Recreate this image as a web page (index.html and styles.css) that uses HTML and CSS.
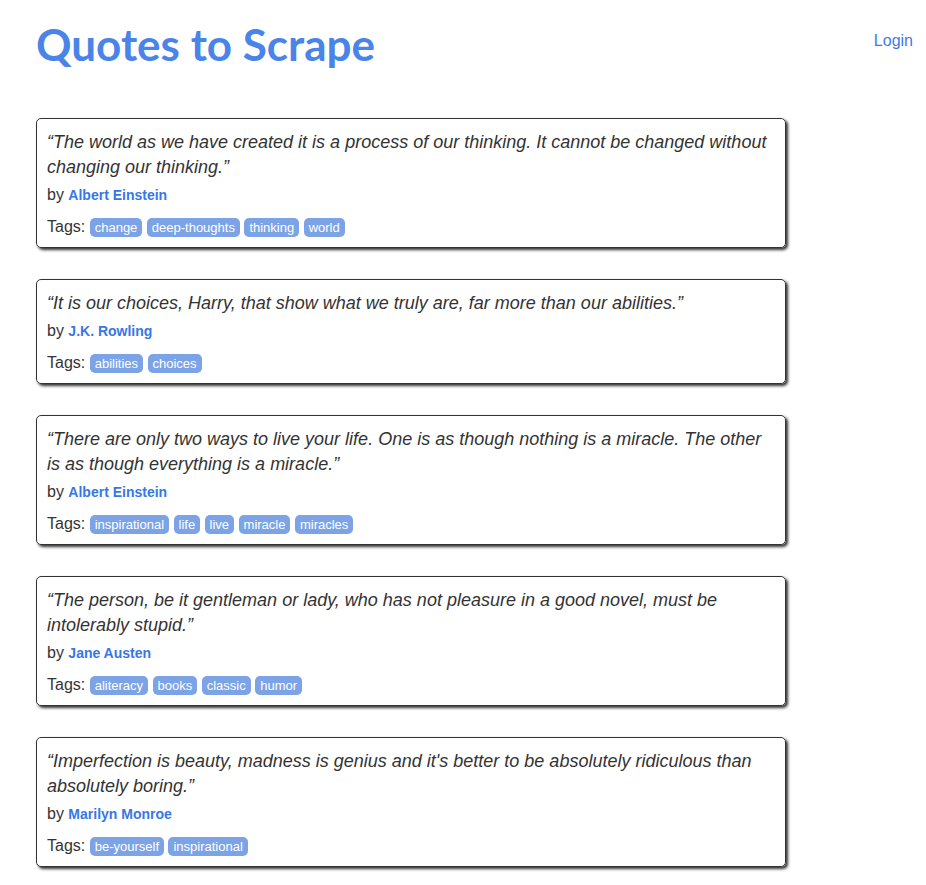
FILE: index.html
```html
<!DOCTYPE html>
<html>
<head>
<meta charset="utf-8">
<title>Quotes to Scrape</title>
<link rel="stylesheet" href="styles.css">
</head>
<body>
<div class="page">
  <header class="header">
    <h1 class="brand"><a href="#">Quotes to Scrape</a></h1>
    <a class="login" href="#">Login</a>
  </header>
  <main class="quotes">
    <div class="quote">
      <span class="text">“The world as we have created it is a process of our thinking. It cannot be changed without changing our thinking.”</span>
      <span class="by">by <small class="author">Albert Einstein</small></span>
      <div class="tags">Tags: <a class="tag" href="#">change</a> <a class="tag" href="#">deep-thoughts</a> <a class="tag" href="#">thinking</a> <a class="tag" href="#">world</a></div>
    </div>
    <div class="quote">
      <span class="text">“It is our choices, Harry, that show what we truly are, far more than our abilities.”</span>
      <span class="by">by <small class="author">J.K. Rowling</small></span>
      <div class="tags">Tags: <a class="tag" href="#">abilities</a> <a class="tag" href="#">choices</a></div>
    </div>
    <div class="quote">
      <span class="text">“There are only two ways to live your life. One is as though nothing is a miracle. The other is as though everything is a miracle.”</span>
      <span class="by">by <small class="author">Albert Einstein</small></span>
      <div class="tags">Tags: <a class="tag" href="#">inspirational</a> <a class="tag" href="#">life</a> <a class="tag" href="#">live</a> <a class="tag" href="#">miracle</a> <a class="tag" href="#">miracles</a></div>
    </div>
    <div class="quote">
      <span class="text">“The person, be it gentleman or lady, who has not pleasure in a good novel, must be intolerably stupid.”</span>
      <span class="by">by <small class="author">Jane Austen</small></span>
      <div class="tags">Tags: <a class="tag" href="#">aliteracy</a> <a class="tag" href="#">books</a> <a class="tag" href="#">classic</a> <a class="tag" href="#">humor</a></div>
    </div>
    <div class="quote">
      <span class="text">“Imperfection is beauty, madness is genius and it's better to be absolutely ridiculous than absolutely boring.”</span>
      <span class="by">by <small class="author">Marilyn Monroe</small></span>
      <div class="tags">Tags: <a class="tag" href="#">be-yourself</a> <a class="tag" href="#">inspirational</a></div>
    </div>
  </main>
</div>
</body>
</html>
```

FILE: styles.css
```css
html, body {
  margin: 0;
  padding: 0;
  background: #fff;
}
body {
  font-family: "Liberation Sans", Arial, sans-serif;
  font-size: 16px;
  line-height: 20px;
  color: #333;
}
.page {
  padding: 0 13px 0 36px;
}
.header {
  display: flex;
  justify-content: space-between;
  align-items: flex-start;
  height: 118px;
}
.brand {
  margin: 18px 0 0 0;
  font-family: "Lato", "Open Sans", sans-serif;
  font-weight: 700;
  font-size: 44px;
  line-height: 52px;
  letter-spacing: 0;
}
.brand a {
  color: #4a84e8;
  text-decoration: none;
}
.login {
  margin-top: 31px;
  color: #3d7ae6;
  text-decoration: none;
  font-size: 16px;
  line-height: 20px;
}
.quotes {
  width: 750px;
}
.quote {
  border: 1px solid #333;
  border-radius: 5px;
  box-shadow: 2px 2px 3px #333;
  padding: 11px 10px 10px;
  margin-bottom: 31px;
}
.text {
  display: block;
  font-size: 18px;
  line-height: 25px;
  font-style: italic;
  margin-bottom: 5px;
}
.by {
  display: block;
  line-height: 20px;
}
.author {
  font-size: 14px;
  font-weight: 700;
  color: #3677e8;
}
.tags {
  margin-top: 12px;
  line-height: 20px;
}
.tag {
  display: inline-block;
  font-size: 13px;
  line-height: 15px;
  padding: 2px 5px;
  border-radius: 5px;
  color: #fff;
  background: #7ca3e6;
  text-decoration: none;
}
```
